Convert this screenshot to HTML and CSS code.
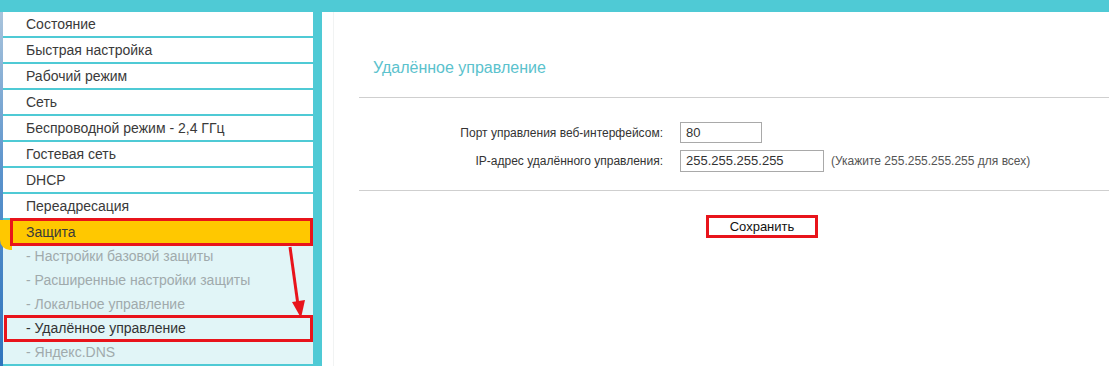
FILE: index.html
```html
<!DOCTYPE html>
<html lang="ru">
<head>
<meta charset="utf-8">
<title>Удалённое управление</title>
<link rel="stylesheet" href="styles.css">
</head>
<body>
<div class="topbar"></div>
<div class="main">
  <div class="edge"></div>
  <nav class="sidebar">
    <div class="item">Состояние</div>
    <div class="item">Быстрая настройка</div>
    <div class="item">Рабочий режим</div>
    <div class="item">Сеть</div>
    <div class="item">Беспроводной режим - 2,4 ГГц</div>
    <div class="item">Гостевая сеть</div>
    <div class="item">DHCP</div>
    <div class="item">Переадресация</div>
    <div class="item item-active">Защита</div>
    <div class="submenu">
      <div class="sub">- Настройки базовой защиты</div>
      <div class="sub">- Расширенные настройки защиты</div>
      <div class="sub">- Локальное управление</div>
      <div class="sub sub-active">- Удалённое управление</div>
      <div class="sub">- Яндекс.DNS</div>
    </div>
    <div class="mark mark-active"></div>
    <div class="mark mark-sub"></div>
    <svg class="arrow" width="30" height="80" viewBox="0 0 30 80">
      <line x1="6" y1="2" x2="14" y2="60" stroke="#e8141b" stroke-width="3"/>
      <polygon points="8,57 21,55 17,73" fill="#e8141b"/>
    </svg>
  </nav>
  <div class="content">
    <h1 class="title">Удалённое управление</h1>
    <div class="rule"></div>
    <div class="form">
      <label class="label">Порт управления веб-интерфейсом:</label>
      <div class="field"><span class="input input-port">80</span></div>
      <label class="label">IP-адрес удалённого управления:</label>
      <div class="field"><span class="input input-ip">255.255.255.255</span><span class="hint">(Укажите 255.255.255.255 для всех)</span></div>
    </div>
    <div class="rule rule-second"></div>
    <div class="actions"><button class="save">Сохранить</button></div>
  </div>
</div>
</body>
</html>
```

FILE: styles.css
```css
* { box-sizing: border-box; }
html, body { margin: 0; padding: 0; }
body {
  width: 1109px;
  height: 366px;
  overflow: hidden;
  background: #fff;
  font-family: "Liberation Sans", Arial, sans-serif;
  color: #333;
}
.topbar {
  height: 12px;
  background: #4fcad5;
}
.main {
  display: flex;
  height: 354px;
}
.edge {
  width: 3px;
  flex: none;
  background: linear-gradient(#a9c4dc, #5b93cc 45%, #2f74bd);
}
.sidebar {
  position: relative;
  width: 319px;
  flex: none;
  border-right: 9px solid #4fcad5;
  border-bottom: 2px solid #4fcad5;
  background: #fff;
}
.item {
  height: 26px;
  line-height: 24px;
  padding-left: 23px;
  font-size: 14px;
  color: #3a3a3a;
  border-bottom: 2px solid #4fcad5;
  background: #fff;
}
.item-active {
  position: relative;
  height: 24px;
  border-bottom: none;
  background: #ffc800;
  border-bottom-left-radius: 8px;
}
.item-active::before {
  content: "";
  position: absolute;
  left: -3px;
  top: 0;
  width: 12px;
  height: 30px;
  background: #ffc800;
  border-bottom-left-radius: 10px;
  z-index: 0;
}
.submenu {
  background: #e1f5f7;
  height: 120px;
}
.sub {
  height: 24px;
  line-height: 24px;
  padding-left: 23px;
  font-size: 14px;
  color: #a0aaac;
  position: relative;
}
.sub-active { color: #333; }
.mark {
  position: absolute;
  border: 3px solid #e8141b;
  pointer-events: none;
}
.mark-active {
  left: 7px;
  top: 206px;
  width: 303px;
  height: 28px;
}
.mark-sub {
  left: 1px;
  top: 303px;
  width: 309px;
  height: 27px;
}
.arrow {
  position: absolute;
  left: 281px;
  top: 233px;
}
.content {
  flex: 1;
  margin-left: 11px;
  border-left: 1px solid #f1f3f3;
  padding-left: 25px;
}
.title {
  margin: 46px 0 0 14px;
  height: 20px;
  line-height: 20px;
  font-size: 16px;
  font-weight: normal;
  color: #5bc2cd;
}
.rule {
  margin-top: 19px;
  height: 1px;
  background: #cfcfcf;
}
.form {
  display: grid;
  grid-template-columns: 304px 1fr;
  column-gap: 17px;
  row-gap: 7px;
  margin-top: 24px;
  align-items: center;
}
.label {
  text-align: right;
  font-size: 12px;
  color: #333;
}
.field {
  display: flex;
  align-items: center;
}
.input {
  display: inline-block;
  height: 22px;
  line-height: 20px;
  border: 1px solid #a9a9a9;
  padding-left: 5px;
  font-size: 13px;
  color: #333;
}
.input-port { width: 82px; height: 21px; }
.input-ip { width: 144px; }
.hint {
  margin-left: 7px;
  font-size: 12px;
  color: #555;
}
.rule-second { margin-top: 18px; }
.actions {
  margin-top: 24px;
  padding-left: 347px;
}
.save {
  width: 112px;
  height: 23px;
  border: 3px solid #e8141b;
  background: #fff;
  font-family: "Liberation Sans", Arial, sans-serif;
  font-size: 13px;
  color: #111;
  padding: 0;
  line-height: 17px;
}
```
